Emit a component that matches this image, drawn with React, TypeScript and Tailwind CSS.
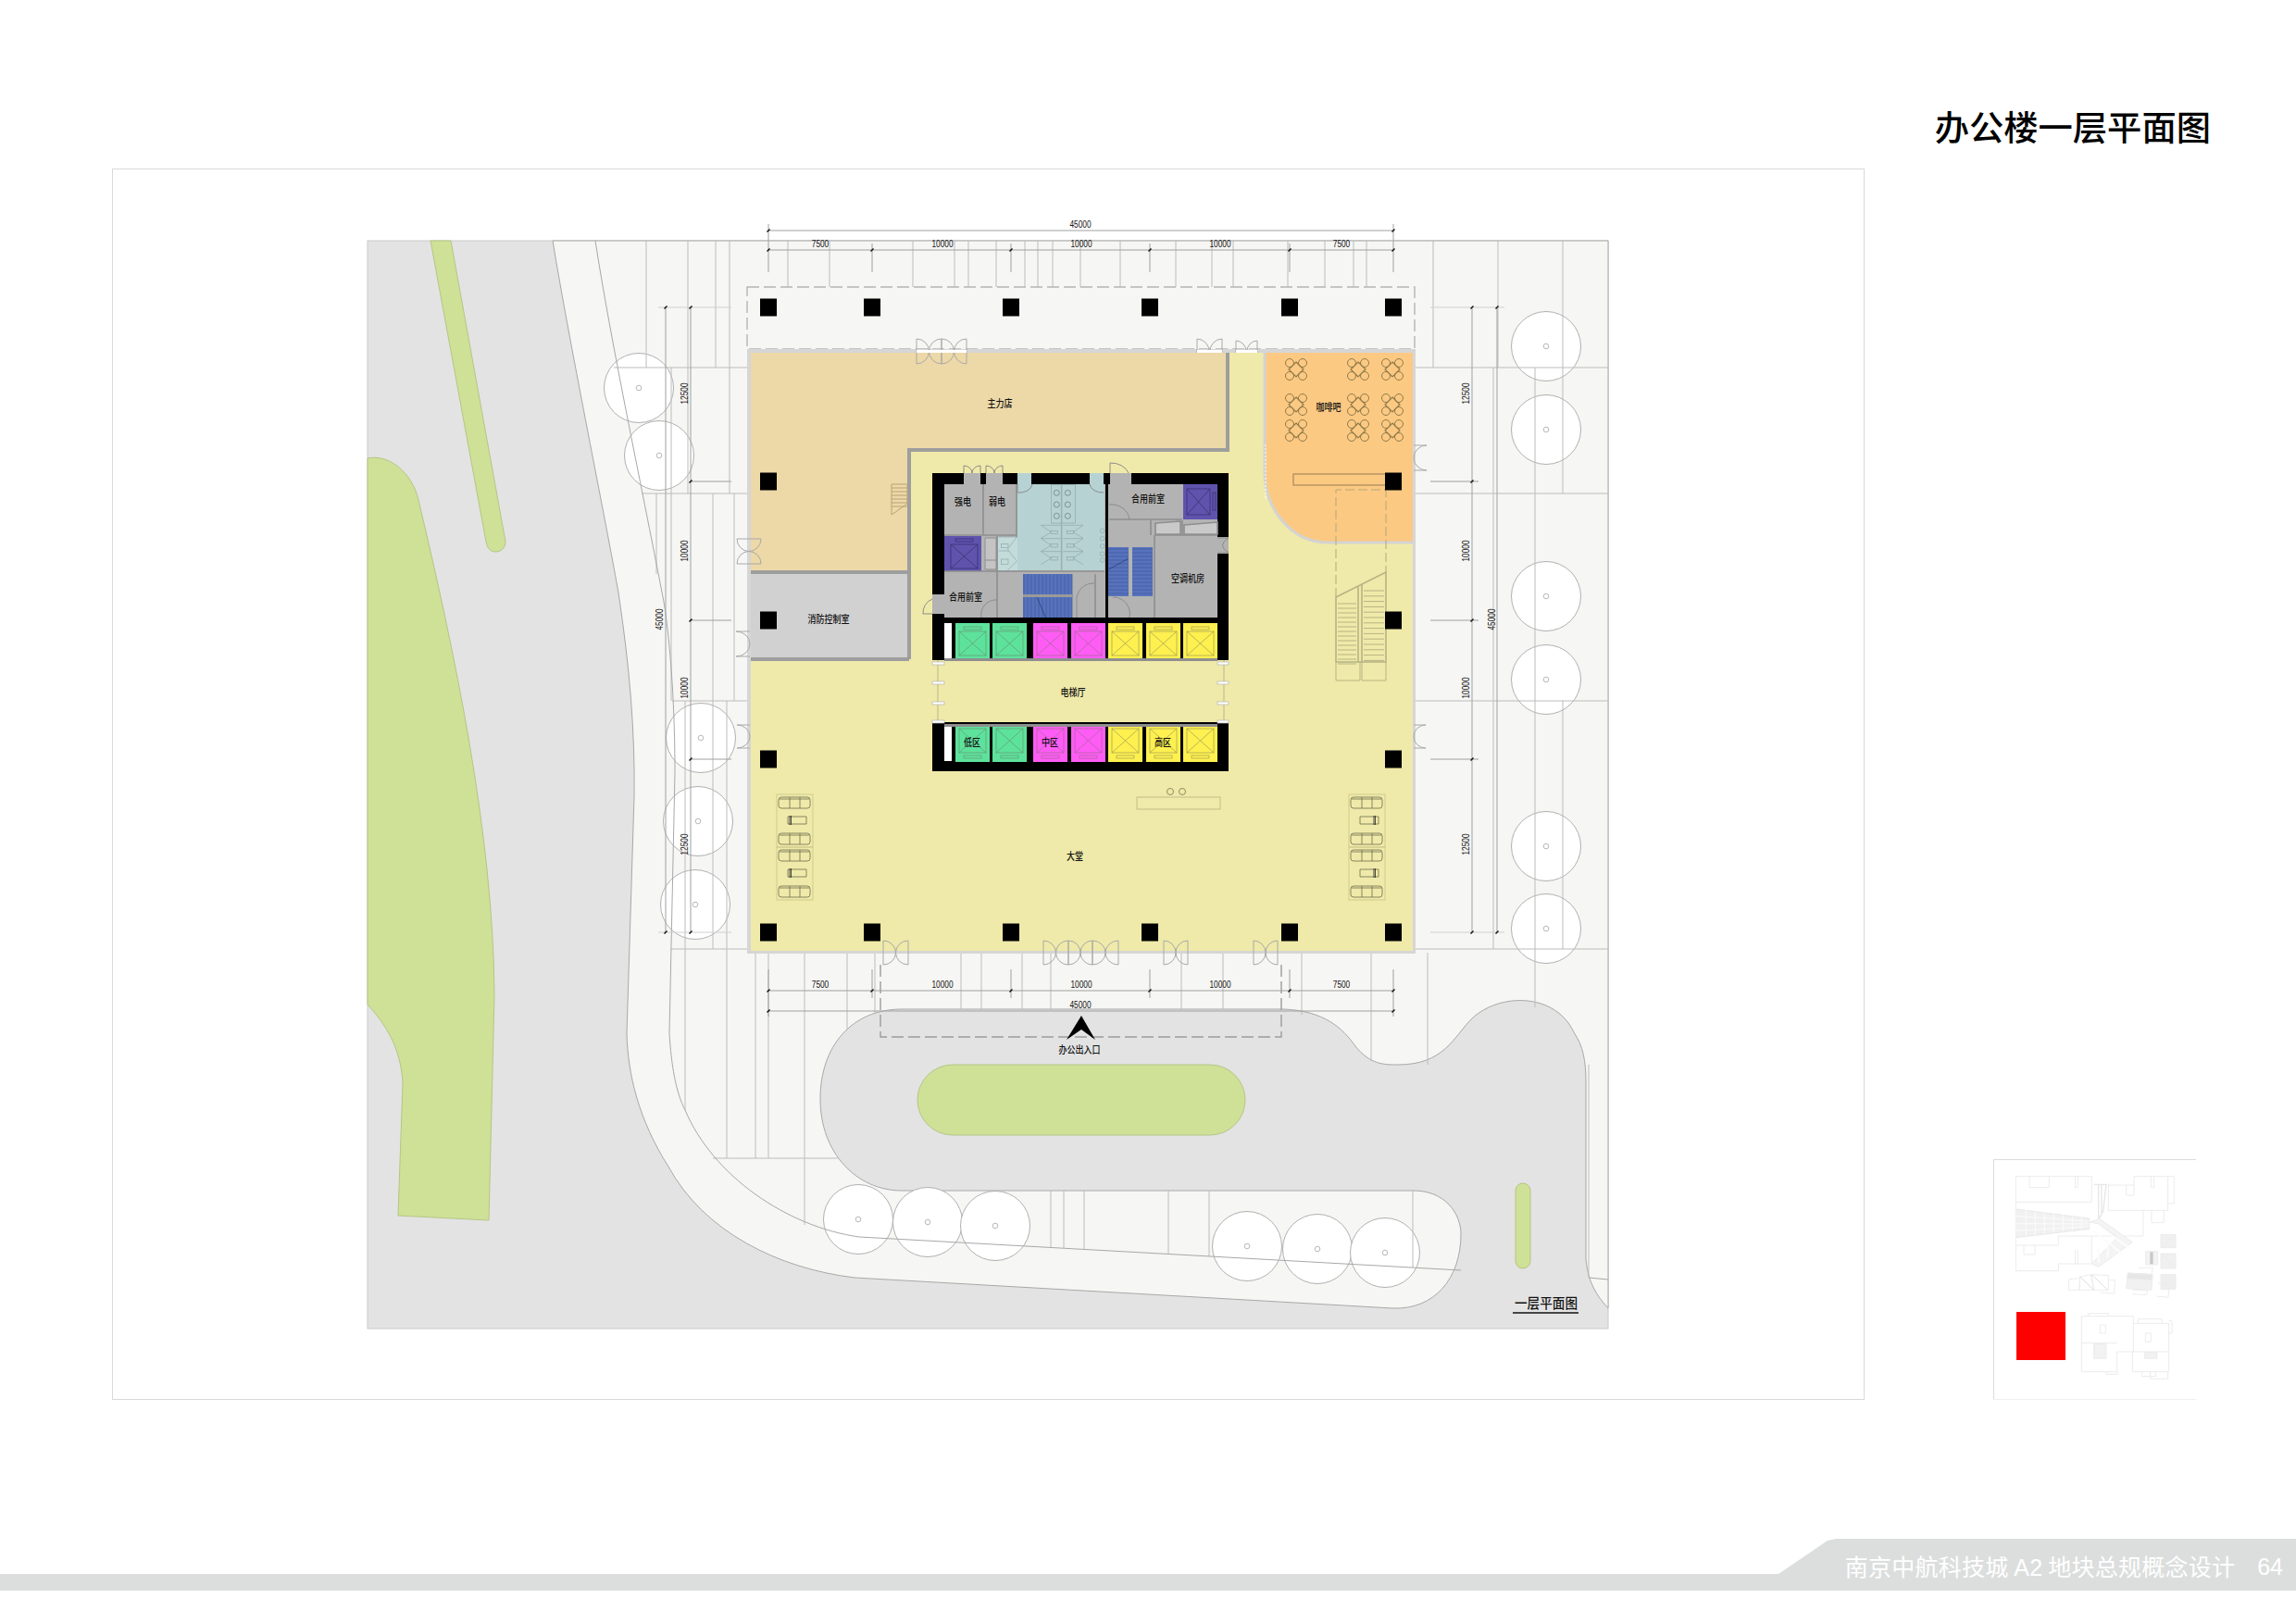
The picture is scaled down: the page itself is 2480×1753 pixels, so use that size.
import type { ReactNode } from "react";

const columnsX = [830, 942, 1092, 1242, 1393, 1505];
const treeSpots = [
  [1670, 374], [1670, 464], [1670, 644], [1670, 734], [1670, 914], [1670, 1003],
  [690, 419], [712, 492], [757, 797], [754, 887], [751, 977],
  [927, 1317], [1002, 1320], [1075, 1324], [1347, 1346], [1423, 1349], [1496, 1353],
];
// x, from y, to y
const paving = [
  [851, 260, 310], [896, 260, 310], [986, 260, 310], [1031, 260, 310], [1046, 260, 310], [1076, 260, 310],
  [1107, 260, 310], [1121, 260, 310], [1137, 260, 310], [1167, 260, 310], [1210, 260, 310], [1270, 260, 310],
  [1309, 260, 310], [1332, 260, 310], [1391, 260, 310], [1431, 260, 310], [1462, 260, 310], [1476, 260, 310],
  [1548, 260, 397], [1618, 260, 397], [1613, 397, 1025], [1658, 397, 1088], [1688, 260, 533], [1688, 757, 1025],
  [698, 260, 397], [743, 260, 533], [773, 260, 397], [788, 260, 533], [725, 397, 757], [709, 533, 620],
  [770, 533, 757], [793, 533, 757], [740, 757, 1199], [770, 757, 1025], [785, 757, 1251],
  [816, 1029, 1251], [830, 1029, 1251], [869, 1029, 1323], [915, 1029, 1112], [945, 1029, 1094], [1038, 1029, 1090],
  [1060, 1029, 1090], [1104, 1029, 1090], [1135, 1029, 1090], [1276, 1029, 1090], [1321, 1029, 1090],
  [1406, 1029, 1096], [1481, 1029, 1146], [1542, 1029, 1150],
  [1135, 1286, 1347], [1149, 1286, 1348], [1171, 1286, 1350], [1262, 1286, 1355], [1306, 1286, 1357], [1526, 1286, 1369],
  [1716, 1150, 1380],
];
const pavingH = [
  [663, 807, 397], [1528, 1737, 397], [693, 807, 533], [1528, 1737, 533], [726, 807, 757], [1528, 1737, 757],
  [725, 807, 1025], [1528, 1737, 1025], [770, 905, 1251],
];
const tables = [1400, 1467, 1504].flatMap((x) => [399, 437, 465].map((y) => [x, y]));
const cars = [
  { x: 1032, c: "#5de29c" }, { x: 1072, c: "#5de29c" }, { x: 1116, c: "#ff5cf5" }, { x: 1157, c: "#ff5cf5" },
  { x: 1197, c: "#fdf04f" }, { x: 1238, c: "#fdf04f" }, { x: 1278, c: "#fdf04f" },
];

function T({ x, y, s = 9, sy = 1.2, rot, dim, children }: { x: number; y: number; s?: number; sy?: number; rot?: boolean; dim?: boolean; children: ReactNode }) {
  return (
    <text
      transform={`translate(${x} ${y})${rot ? " rotate(-90)" : ""} scale(1 ${sy})`}
      fontSize={s}
      textAnchor="middle"
      dominantBaseline="central"
      fill="#111"
      stroke="none"
      fontWeight={dim ? 400 : 500}
      className={dim ? "font-['Liberation_Sans',sans-serif]" : undefined}
    >
      {children}
    </text>
  );
}

function Dim({ x, y, rot, children }: { x: number; y: number; rot?: boolean; children: ReactNode }) {
  return <T x={x} y={y} s={8.3} sy={1.3} rot={rot} dim>{children}</T>;
}

function Tick({ x, y }: { x: number; y: number }) {
  return <path d={`M${x - 1.5} ${y + 1.5}L${x + 1.5} ${y - 1.5}`} stroke="#111" strokeWidth={1.4} />;
}

// doors that swing both ways across a horizontal wall
function SwingH({ x, w, t, b }: { x: number; w: number; t: number; b: number }) {
  const rx = w / 2;
  const ry = (b - t) / 2;
  return (
    <path
      d={`M${x} ${t}V${b}M${x + w} ${t}V${b}M${x} ${t}A${rx} ${ry} 0 0 1 ${x} ${b}M${x + w} ${t}A${rx} ${ry} 0 0 0 ${x + w} ${b}`}
      fill="none"
      stroke="#a9a9a9"
    />
  );
}

// door on an outer vertical wall, leaves meet at the wall
function SwingV({ y, h, wall, out }: { y: number; h: number; wall: number; out: number }) {
  const sweep = out < wall ? 1 : 0;
  return (
    <path
      d={`M${wall} ${y}H${out}A${Math.abs(wall - out)} ${h / 2} 0 0 ${sweep} ${out} ${y + h}H${wall}`}
      fill="none"
      stroke="#a9a9a9"
    />
  );
}

// pair of leaves on the north wall
function PairTop({ x, w, t, b }: { x: number; w: number; t: number; b: number }) {
  const rx = w / 2;
  const ry = b - t;
  return (
    <g fill="none" stroke="#a9a9a9">
      <path d={`M${x} ${b}V${t}A${rx} ${ry} 0 0 1 ${x + rx} ${b}A${rx} ${ry} 0 0 1 ${x + w} ${t}V${b}`} />
      <rect x={x} y={b - 3} width={w} height={3} fill="#fff" stroke="none" />
    </g>
  );
}

function Car({ x, c, low }: { x: number; c: string; low?: boolean }) {
  const y = low ? 785 : 673;
  const boxY = low ? 787 : 682;
  const slotY = low ? 816 : 677;
  return (
    <g>
      <rect x={x} y={y} width={37} height={38} fill={c} />
      <g fill="none" stroke="#6d6d5c" strokeOpacity={0.55} strokeWidth={0.8}>
        <rect x={x + 4} y={boxY} width={29} height={26} />
        <path d={`M${x + 4} ${boxY}L${x + 33} ${boxY + 26}M${x + 33} ${boxY}L${x + 4} ${boxY + 26}`} />
        <rect x={x + 9} y={slotY} width={19} height={3} />
      </g>
    </g>
  );
}

function Sofas({ x, y, flip }: { x: number; y: number; flip?: boolean }) {
  return (
    <g fill="none" stroke="#6e6c4e" strokeWidth={0.8}>
      <rect x={x} y={y} width={39} height={57} stroke="#cfcb8e" strokeWidth={1} />
      {[3, 42].map((d) => (
        <g key={d}>
          <rect x={x + 2} y={y + d} width={34} height={12} rx={3} />
          <path d={`M${x + 14} ${y + d}v12M${x + 25} ${y + d}v12M${x + 3} ${y + d + 2}h32`} />
        </g>
      ))}
      <path d={`M${x + 12} ${y + 24}h20M${x + 12} ${y + 32}h20M${x + 12} ${y + 24}v8M${x + 32} ${y + 24}v8`} />
      <path d={flip ? `M${x + 27} ${y + 23}v10M${x + 28.5} ${y + 23}v10` : `M${x + 14} ${y + 23}v10M${x + 15.5} ${y + 23}v10`} stroke="#222" />
    </g>
  );
}

function CoreRooms() {
  return (
    <g>
      <rect x={1007} y={511} width={320} height={322} fill="#000" />
      <rect x={1020} y={523} width={295} height={144} fill="#b3b3b3" />
      {/* door gaps in the core wall */}
      <rect x={1041} y={511} width={18} height={12} fill="#b3b3b3" />
      <rect x={1065} y={511} width={18} height={12} fill="#b3b3b3" />
      <rect x={1199} y={511} width={23} height={12} fill="#b3b3b3" />
      <rect x={1315} y={580} width={12} height={18} fill="#b3b3b3" />
      <rect x={1007} y={642} width={13} height={21} fill="#b3b3b3" />
      {/* toilets */}
      <rect x={1099} y={511} width={15} height={12} fill="#b6d2d3" />
      <rect x={1177} y={511} width={15} height={12} fill="#b6d2d3" />
      <rect x={1099} y={523} width={94} height={93} fill="#b6d2d3" />
      <rect x={1078} y={580} width={21} height={36} fill="#c3dbdb" />
      <rect x={1194} y={511} width={3} height={156} fill="#000" />
      {/* stairs */}
      <rect x={1105} y={620} width={53} height={47} fill="#5773bd" />
      <rect x={1197} y={591} width={22} height={53} fill="#5773bd" />
      <rect x={1223} y={591} width={22} height={53} fill="#5773bd" />
      <g stroke="#3f5798" strokeWidth={0.7}>
        {Array.from({ length: 14 }, (_, i) => (
          <path key={i} d={`M${1106 + i * 4} 620v47`} />
        ))}
        {Array.from({ length: 13 }, (_, i) => (
          <path key={i} d={`M1197 ${593 + i * 4}h48`} />
        ))}
      </g>
      <rect x={1105} y={642} width={53} height={3} fill="#9a9a9a" />
      <rect x={1219} y={591} width={4} height={53} fill="#b3b3b3" />
      {/* lift lobby shafts */}
      <rect x={1020} y={579} width={40} height={38} fill="#5f53ad" />
      <rect x={1278} y={523} width={37} height={38} fill="#5f53ad" />
      <g fill="none" stroke="#3a3270" strokeWidth={0.8}>
        <rect x={1027} y={588} width={29} height={26} />
        <path d="M1027 588L1056 614M1056 588L1027 614" />
        <rect x={1032} y={582} width={19} height={3} />
        <rect x={1282} y={528} width={25} height={28} />
        <path d="M1282 528L1307 556M1307 528L1282 556" />
        <rect x={1310} y={532} width={3} height={19} />
      </g>
      {/* internal walls */}
      <g fill="none" stroke="#8e8e8e" strokeWidth={1.6}>
        <path d="M1062 523V577M1020 578H1097M1098 523V580M1020 617H1193M1077 579V667M1183 620V667" />
        <path d="M1198 561H1277M1243 562V578M1247 578V667M1247 578H1315M1277 562V578" />
        <path d="M1248 565L1275 563V577H1248ZM1279 567L1315 564V577H1279Z" fill="#c9c9c9" />
        <path d="M1064 581H1076V615H1064ZM1064 605H1076" fill="#c4c4c4" strokeWidth={1} />
      </g>
      {/* door arcs inside the core */}
      <g fill="none" stroke="#8c8c8c">
        <path d="M1041 511V503A9 8 0 0 1 1050 511A9 8 0 0 1 1059 503V511M1065 511V503A9 8 0 0 1 1074 511A9 8 0 0 1 1083 503V511" />
        <path d="M1199 511V500A20 16 0 0 1 1219 511" />
        <path d="M1099 523V532A14 10 0 0 0 1115 523M1177 523A14 10 0 0 0 1192 532" />
        <path d="M1198 545A20 18 0 0 1 1220 561M1060 667A16 16 0 0 1 1077 648M1163 667V650A18 18 0 0 1 1182 630" />
        <path d="M1220 667A18 18 0 0 0 1202 645M1007 663H997A16 16 0 0 1 1007 647" />
        <path d="M1315 581H1327Q1314 589 1327 597H1315" />
      </g>
      {/* fixtures drawn in zoomed units */}
      <g transform="translate(980 480) scale(0.3333)" fill="none" stroke="#8fa6a8" strokeWidth={2}>
        <rect x={467} y={130} width={78} height={125} />
        <path d="M500 130V408" strokeWidth={5} stroke="#a0b0b0" />
        {[157, 195, 232].map((y) => (
          <g key={y} stroke="#5f7477">
            <circle cx={484} cy={y} r={9} />
            <circle cx={520} cy={y} r={9} />
          </g>
        ))}
        {[262, 305, 347].map((y) => (
          <g key={y}>
            <path d={`M433 ${y}H498M433 ${y}L466 ${y + 22}L433 ${y + 42}M570 ${y}L537 ${y + 22}L570 ${y + 42}M505 ${y}H570`} />
            <rect x={465} y={y + 18} width={22} height={10} />
            <rect x={518} y={y + 18} width={22} height={10} />
          </g>
        ))}
        <path d="M296 300H355L325 340L355 378L325 408M296 345H330" />
        <rect x={305} y={323} width={22} height={12} />
        <rect x={305} y={372} width={22} height={16} />
        {[280, 305, 330, 355, 375].map((y) => (
          <circle key={y} cx={632} cy={y} r={7} />
        ))}
        <path d="M653 405L716 370M420 495L448 560" stroke="#26366a" />
      </g>
      {/* lift banks */}
      <rect x={1020} y={673} width={295} height={38} fill="#000" />
      <rect x={1020} y={785} width={295} height={37} fill="#000" />
      <rect x={1007} y={713} width={320} height={67} fill="#efeaa9" />
      <rect x={1020} y={711} width={295} height={3} fill="#8f8f8f" />
      <rect x={1020} y={782} width={295} height={3} fill="#8f8f8f" />
      <rect x={1020} y={673} width={8} height={38} fill="#fff" />
      <rect x={1020} y={785} width={8} height={37} fill="#fff" />
      {cars.map((c) => (
        <Car key={c.x} x={c.x} c={c.c} />
      ))}
      {cars.map((c) => (
        <Car key={c.x} x={c.x} c={c.c} low />
      ))}
      {/* glazing at both ends of the lift hall */}
      <path d="M1013 713V780M1322 713V780" stroke="#b9b58d" />
      {[715, 736, 758, 778].map((y) => (
        <g key={y} fill="#fff" stroke="#b5b5b5" strokeWidth={0.7}>
          <rect x={1007} y={y} width={13} height={3} />
          <rect x={1315} y={y} width={12} height={3} />
        </g>
      ))}
    </g>
  );
}

function FloorPlan() {
  return (
    <svg viewBox="122 183 1891 1328" width={1891} height={1328} className="block">
      {/* site */}
      <rect x={397} y={260} width={1340} height={1175} fill="#e3e3e3" stroke="#c9c9c9" />
      <path
        d="M597 260C615 370 650 540 668 640C680 720 686 790 685 860L677 1116C678 1160 690 1210 722 1260C760 1330 840 1370 923 1380L1504 1413C1550 1415 1578 1380 1578 1333C1578 1310 1560 1286 1527 1286L974 1286C925 1286 886 1245 886 1187C886 1130 920 1090 974 1090L1387 1090C1430 1092 1450 1110 1464 1130C1480 1150 1495 1150 1510 1150C1560 1150 1570 1120 1590 1100C1620 1072 1680 1072 1700 1115C1710 1130 1713 1145 1713 1170L1713 1360C1715 1385 1725 1400 1737 1413L1737 260Z"
        fill="#f6f6f4"
        stroke="#a8a8a8"
      />
      {/* planting */}
      <g fill="#cfe197" stroke="#b5c585">
        <path d="M465 260H487L546 585C546 592 541 596 535 596C530 596 526 592 525 585Z" />
        <path d="M397 495C420 490 445 510 452 540C490 700 533 900 534 1075L528 1318L430 1313L435 1170C433 1130 415 1105 397 1085Z" />
        <rect x={991} y={1150} width={354} height={76} rx={38} />
        <rect x={1637} y={1278} width={16} height={92} rx={8} />
      </g>
      {/* trees */}
      <g fill="#fff" stroke="#b0b0b0">
        {treeSpots.map(([x, y]) => (
          <circle key={`${x}-${y}`} cx={x} cy={y} r={37.5} />
        ))}
      </g>
      <g fill="none" stroke="#b8b8b8">
        {treeSpots.map(([x, y]) => (
          <circle key={`${x}-${y}`} cx={x} cy={y} r={2.8} />
        ))}
      </g>
      {/* paving joints */}
      <g stroke="#bcbcbc">
        {paving.map(([x, a, b]) => (
          <path key={`${x}-${a}`} d={`M${x} ${a}V${b}`} />
        ))}
        {pavingH.map(([a, b, y]) => (
          <path key={`${a}-${y}`} d={`M${a} ${y}H${b}`} />
        ))}
      </g>
      <path
        d="M643 260C660 370 690 510 717 650C725 700 729 770 729 834L723 1116C725 1150 730 1180 740 1199C770 1270 850 1325 928 1336L1578 1372M1716 1380L1737 1382"
        fill="none"
        stroke="#a8a8a8"
      />
      {/* building */}
      <rect x={807} y={310} width={721} height={67} fill="none" stroke="#b5b5b5" strokeWidth={1.4} strokeDasharray="13 5" />
      <rect x={807} y={377} width={722} height={653} fill="#d6d6d6" />
      <rect x={811} y={381} width={715} height={646} fill="#efeaa9" />
      <path d="M811 381H1324V484H981V616H811Z" fill="#edd8a8" />
      <rect x={811} y={620} width={169} height={90} fill="#d1d1d1" />
      <path d="M1326 381V486H982V712M811 618H982M811 712H982" fill="none" stroke="#9e9e9e" strokeWidth={4} />
      <path d="M1367 381H1526V585H1434C1395 585 1367 550 1367 510Z" fill="#fcc983" />
      <path d="M1366 381V510C1366 550 1395 586 1434 586H1526" fill="none" stroke="#d3d3d3" strokeWidth={3} />
      <path d="M1367 480V540" stroke="#fff" strokeWidth={1} strokeDasharray="2 2" />
      {/* stair in the shop */}
      <g fill="none" stroke="#b9a277">
        <path d="M963 523H980V544L963 556Z" />
        {[527, 531, 535, 539, 543, 547].map((y) => (
          <path key={y} d={`M963 ${y}H980`} />
        ))}
      </g>
      {/* cafe tables */}
      <g fill="none" stroke="#8f7a48">
        {tables.map(([x, y]) => (
          <g key={`${x}-${y}`}>
            <path d={`M${x} ${y - 8}L${x + 8} ${y}L${x} ${y + 8}L${x - 8} ${y}Z`} strokeWidth={1.2} />
            <circle cx={x - 7} cy={y - 7} r={4.5} />
            <circle cx={x + 7} cy={y - 7} r={4.5} />
            <circle cx={x - 7} cy={y + 7} r={4.5} />
            <circle cx={x + 7} cy={y + 7} r={4.5} />
          </g>
        ))}
      </g>
      <rect x={1397} y={512} width={100} height={12} fill="none" stroke="#b3935e" strokeWidth={1.4} />
      {/* escalators */}
      <path d="M1443 645V529H1497V618" fill="none" stroke="#b3a878" strokeDasharray="10 4" />
      <g fill="none" stroke="#b7b383">
        <path d="M1443 645L1497 618V715H1443ZM1467 633V715M1471 631V715" strokeWidth={1.6} />
        <path d="M1443 715V735H1469V715M1471 715V735H1497V715" />
        {Array.from({ length: 14 }, (_, i) => (
          <path key={i} d={`M1445 ${652 + i * 5}H1465M1473 ${638 + i * 5.8}H1495`} />
        ))}
      </g>
      <CoreRooms />
      {/* lobby furniture */}
      <Sofas x={839} y={858} />
      <Sofas x={839} y={915} />
      <Sofas x={1457} y={858} flip />
      <Sofas x={1457} y={915} flip />
      <rect x={1228} y={861} width={90} height={13} fill="none" stroke="#c2bd89" />
      <circle cx={1264} cy={855} r={3.5} fill="none" stroke="#8f8c62" />
      <circle cx={1277} cy={855} r={3.5} fill="none" stroke="#8f8c62" />
      {/* columns */}
      <g fill="#000">
        {[332, 1007].flatMap((y) =>
          columnsX.map((x) => <rect key={`${x}-${y}`} x={x - 9} y={y - 9.5} width={18} height={19} />),
        )}
        {[520, 670, 820].flatMap((y) =>
          [830, 1505].map((x) => <rect key={`${x}-${y}`} x={x - 9} y={y - 9.5} width={18} height={19} />),
        )}
      </g>
      {/* doors */}
      <SwingH x={990} w={27} t={366} b={393} />
      <SwingH x={1017} w={27} t={366} b={393} />
      <rect x={990} y={378} width={54} height={3} fill="#fff" />
      <PairTop x={1293} w={27} t={366} b={381} />
      <PairTop x={1335} w={23} t={368} b={381} />
      <SwingH x={954} w={27} t={1016} b={1042} />
      <SwingH x={1127} w={27} t={1016} b={1042} />
      <SwingH x={1154} w={26} t={1016} b={1042} />
      <SwingH x={1180} w={28} t={1016} b={1042} />
      <SwingH x={1257} w={26} t={1016} b={1042} />
      <SwingH x={1354} w={26} t={1016} b={1042} />
      <path d="M796 582H822M796 609H822M796 582A13 13.5 0 0 0 822 582M796 609A13 13.5 0 0 1 822 609" fill="none" stroke="#a9a9a9" />
      <SwingV y={682} h={27} wall={810} out={795} />
      <SwingV y={783} h={25} wall={810} out={796} />
      <SwingV y={481} h={27} wall={1527} out={1541} />
      <SwingV y={783} h={25} wall={1527} out={1540} />
      {/* forecourt dashed canopy and entrance arrow */}
      <path d="M951 1042V1120H1384V1042" fill="none" stroke="#9c9c9c" strokeWidth={1.4} strokeDasharray="13 5" />
      <path d="M1168 1097L1183 1123L1168 1112L1152 1123Z" fill="#000" />
      {/* dimensions */}
      <g stroke="#a0a0a0" fill="none">
        <path d="M830 249H1505M830 270H1505M830 242V294M1505 242V294M942 263V294M1092 263V294M1242 263V294M1393 263V294" />
        <path d="M830 1070H1505M830 1092H1505M830 1047V1098M1505 1047V1098M942 1047V1078M1092 1047V1078M1242 1047V1078M1393 1047V1078" />
        <path d="M719 332V1007M746 332V1007M746 520H790M746 670H790M746 820H790" />
        <path d="M1590 332V1007M1617 332V1007M1545 520H1597M1545 670H1597M1545 820H1597" />
      </g>
      <g stroke="#d0d0d0" fill="none">
        <path d="M711 332H790M711 1007H790M1545 332H1625M1545 1007H1625" />
      </g>
      {columnsX.flatMap((x) => [270, 1070].map((y) => <Tick key={`${x}-${y}`} x={x} y={y} />))}
      {[830, 1505].flatMap((x) => [249, 1092].map((y) => <Tick key={`${x}-${y}`} x={x} y={y} />))}
      {[746, 1590].flatMap((x) => [332, 520, 670, 820, 1007].map((y) => <Tick key={`${x}-${y}`} x={x} y={y} />))}
      {[719, 1617].flatMap((x) => [332, 1007].map((y) => <Tick key={`${x}-${y}`} x={x} y={y} />))}
      <Dim x={1167} y={242}>45000</Dim>
      <Dim x={886} y={263}>7500</Dim>
      <Dim x={1018} y={263}>10000</Dim>
      <Dim x={1168} y={263}>10000</Dim>
      <Dim x={1318} y={263}>10000</Dim>
      <Dim x={1449} y={263}>7500</Dim>
      <Dim x={886} y={1063}>7500</Dim>
      <Dim x={1018} y={1063}>10000</Dim>
      <Dim x={1168} y={1063}>10000</Dim>
      <Dim x={1318} y={1063}>10000</Dim>
      <Dim x={1449} y={1063}>7500</Dim>
      <Dim x={1167} y={1085}>45000</Dim>
      <Dim x={739} y={425} rot>12500</Dim>
      <Dim x={739} y={595} rot>10000</Dim>
      <Dim x={739} y={743} rot>10000</Dim>
      <Dim x={739} y={912} rot>12500</Dim>
      <Dim x={712} y={669} rot>45000</Dim>
      <Dim x={1583} y={425} rot>12500</Dim>
      <Dim x={1583} y={595} rot>10000</Dim>
      <Dim x={1583} y={743} rot>10000</Dim>
      <Dim x={1583} y={912} rot>12500</Dim>
      <Dim x={1611} y={669} rot>45000</Dim>
      {/* room names */}
      <T x={1080} y={435}>主力店</T>
      <T x={895} y={668}>消防控制室</T>
      <T x={1435} y={439}>咖啡吧</T>
      <T x={1040} y={541}>强电</T>
      <T x={1077} y={541}>弱电</T>
      <T x={1240} y={538}>合用前室</T>
      <T x={1043} y={644}>合用前室</T>
      <T x={1283} y={624}>空调机房</T>
      <T x={1159} y={747}>电梯厅</T>
      <T x={1050} y={801}>低区</T>
      <T x={1134} y={801}>中区</T>
      <T x={1256} y={801}>高区</T>
      <T x={1161} y={924}>大堂</T>
      <T x={1166} y={1133}>办公出入口</T>
      <T x={1670} y={1407} s={13.6} sy={1.05}>一层平面图</T>
      <path d="M1634 1418H1705" stroke="#111" strokeWidth={1.5} />
    </svg>
  );
}

function KeyMap() {
  return (
    <svg viewBox="2153 1252 219 260" width={219} height={260} className="block shrink-0">
      <path d="M2153.5 1512V1252.5H2372" fill="none" stroke="#dcdcdc" />
      <path d="M2153 1511.5H2372" stroke="#f0f0f0" />
      <rect x={2178} y={1417} width={53} height={52} fill="#f00" />
      <g transform="translate(2120 1230) scale(0.3333)" fill="none" stroke="#ececec" strokeWidth={3}>
        <path d="M172 205V122H418V205ZM216 122V158H280V122M365 122V158H373V122" />
        <path d="M172 205V428H310V405H418V315H310V345H172M198 345V375H234V345M365 360V405H373V360" />
        <path d="M472 145V232H665V122H555V150H472M530 150V183H555V150M610 122V158H620V122M665 210H685V122H665M585 232V315H420M612 232V272H652V232" />
        <path d="M172 228L410 258V292L172 320" fill="#f1f1f1" stroke="#e8e8e8" />
        <path d="M205 232V316M235 236V312M265 240V308M295 243V304M325 247V300M355 250V297M385 254V294M172 250L410 268M172 275L410 276M172 298L410 284" stroke="#fcfcfc" />
        <path d="M425 148H465L455 235L440 262L440 148M450 148V240" stroke="#e6e6e6" strokeWidth={4} />
        <path d="M410 270L445 260L550 335L440 415L418 405L500 320L440 275Z" fill="#f4f4f4" stroke="#ebebeb" />
        <path d="M425 300L520 375M450 290L535 350M440 350V400M470 340V385" stroke="#fcfcfc" strokeWidth={6} />
        <path d="M642 310H690V353H642ZM642 353L690 310" fill="#f0f0f0" />
        <path d="M642 372H690V420H642ZM642 372L690 420" fill="#f0f0f0" />
        <path d="M642 440H690V488H642Z" fill="#eeeeee" />
        <path d="M593 365H632V408H593Z" fill="#f3f3f3" />
        <path d="M612 367V406" stroke="#c8c8c8" strokeWidth={10} />
        <path d="M345 455L380 452L378 490L343 490ZM380 447L418 440L425 490L378 490ZM415 440L472 443L472 490L425 490ZM472 458L494 458L490 502L445 498" />
        <path d="M380 447L425 490M418 440L470 490" stroke="#dddddd" />
        <path d="M535 435L615 440L612 490L530 485Z" fill="#f1f1f1" />
        <path d="M570 420L616 417L612 440L570 436M550 490L600 492L596 506L550 503M632 468L670 470L666 514L628 510" />
        <path d="M535 435L615 440L614 458L533 453Z" fill="#e6e6e6" />
        <path d="M385 575H553V690H500V755H385ZM385 662H500M407 575V566H473V575M445 603H463V630H445Z" />
        <path d="M425 665H465V712H425Z" fill="#f2f2f2" />
        <path d="M553 598H668V755H550V690H668M568 598V584H645V598M592 630H610V658H592ZM668 590H678V630H668M465 755V763H503V755M580 755V770H625V755M608 755V778H665V755" />
        <path d="M590 692H630V712H590Z" fill="#f2f2f2" />
      </g>
    </svg>
  );
}

export default function App() {
  return (
    <div className="w-[2480px] h-[1753px] bg-white overflow-hidden font-['Noto_Sans_CJK_SC',sans-serif]">
      <div className="h-[182px] flex justify-end pr-[92px] pt-[112px]">
        <h1 className="text-[37.3px] leading-[48px] font-medium text-black">办公楼一层平面图</h1>
      </div>
      <div className="flex items-end gap-[139px] pl-[121px]">
        <div className="w-[1893px] h-[1330px] border border-[#d9d9d9] shrink-0">
          <FloorPlan />
        </div>
        <KeyMap />
      </div>
      <div className="mt-[150px] h-[56px] bg-[#dcdedd] [clip-path:polygon(0_38px,1921px_38px,1974px_2px,1983px_0,100%_0,100%_100%,0_100%)] flex justify-end items-center pt-[4px] pr-[14px] gap-[24px] text-[25px] leading-none text-white">
        <span className="tracking-[0.25px]">南京中航科技城 <span className="font-['Liberation_Sans',sans-serif]">A2</span> 地块总规概念设计</span>
        <span className="font-['Liberation_Sans',sans-serif]">64</span>
      </div>
    </div>
  );
}
